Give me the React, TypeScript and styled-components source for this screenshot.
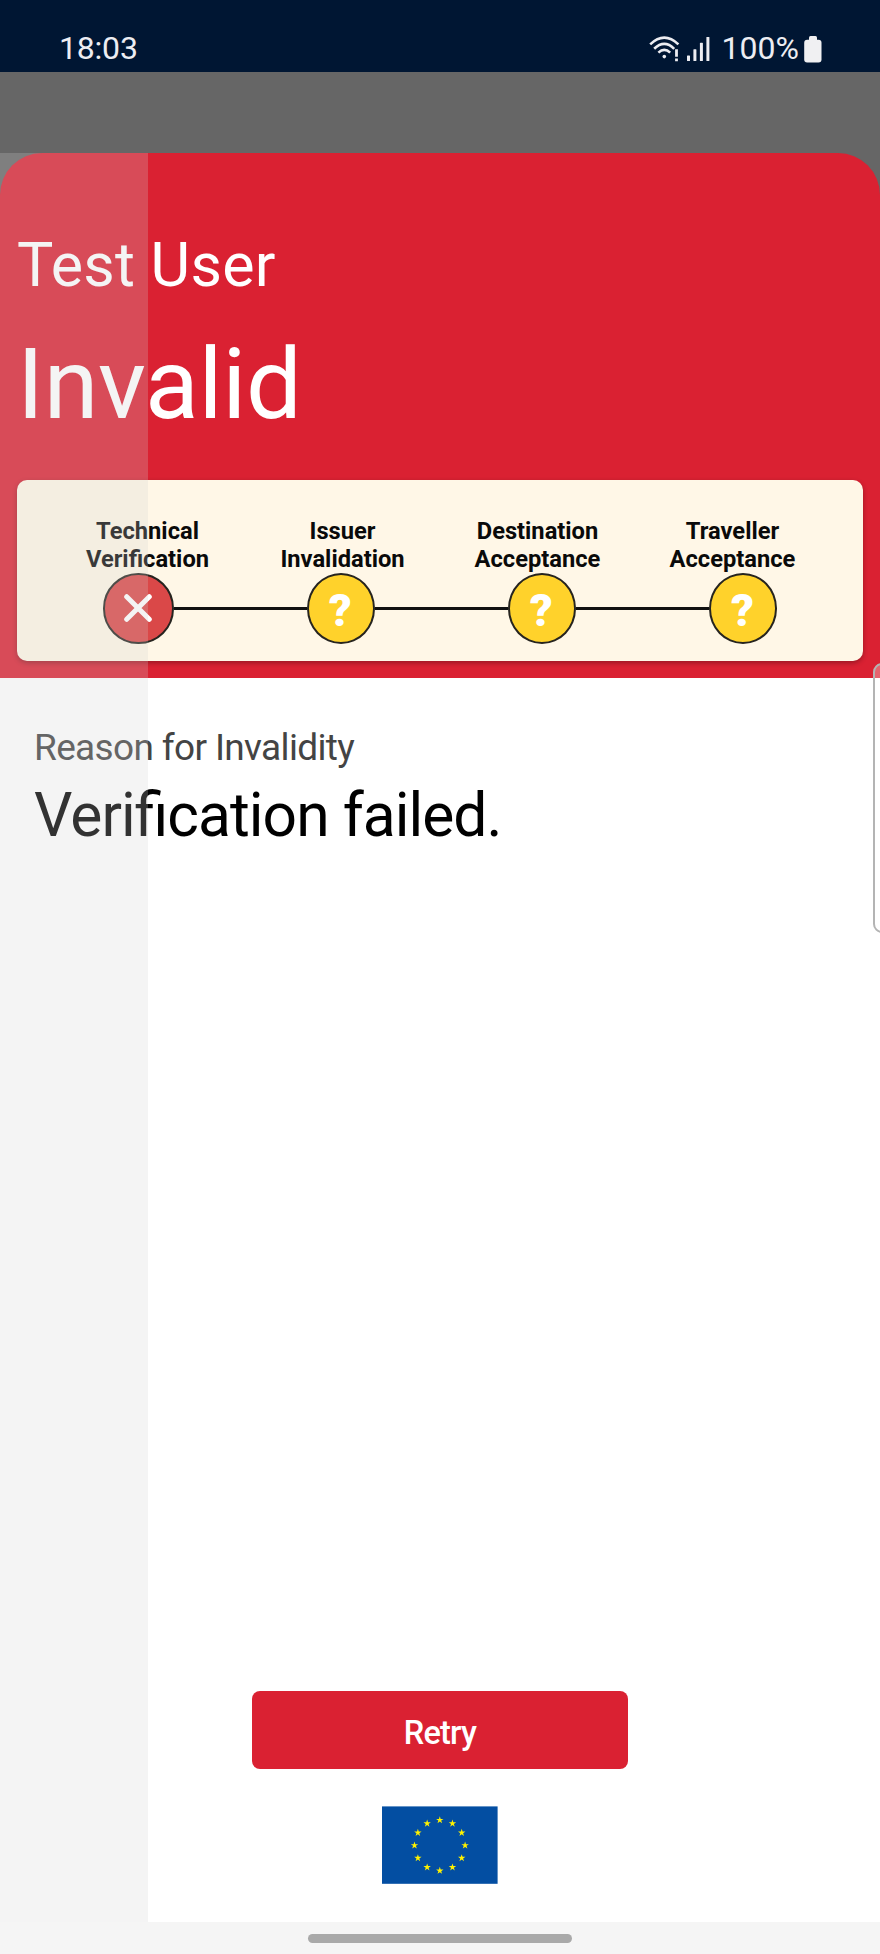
import React from "react";
import styled, { createGlobalStyle } from "styled-components";

const GlobalStyle = createGlobalStyle`
  * { box-sizing: border-box; }
  body { margin: 0; background: #fff; font-family: Roboto, sans-serif; }
`;

const Screen = styled.div`
  position: relative;
  display: flex;
  flex-direction: column;
  width: 880px;
  height: 1954px;
  overflow: hidden;
  background: #fff;
`;

const StatusBar = styled.header`
  display: flex;
  justify-content: space-between;
  height: 71.5px;
  flex: none;
  padding: 27px 58px 0 59px;
  background: #001633;
  color: #ededf2;
  font-size: 32px;
  line-height: 42px;
`;

const Clock = styled.span`
  letter-spacing: -0.2px;
`;

const StatusIcons = styled.div`
  display: flex;
  svg { display: block; }
`;

const WifiTray = styled.div`
  display: flex;
  gap: 6px;
  padding-top: 8px;
`;

const Percent = styled.span`
  margin: 0 5px 0 11px;
`;

const BatteryTray = styled.div`
  padding-top: 7.5px;
`;

const Backdrop = styled.main`
  display: flex;
  flex: 1;
  flex-direction: column;
  padding-top: 81.5px;
  background: #666;
`;

const Sheet = styled.section`
  position: relative;
  display: flex;
  flex: 1;
  flex-direction: column;
`;

const Banner = styled.div`
  height: 525px;
  flex: none;
  padding: 76px 17px 0;
  background: #da2132;
  border-radius: 42px 42px 0 0;
  color: #fff;
`;

const HolderName = styled.div`
  font-size: 61px;
  letter-spacing: 0.25px;
  line-height: 72px;
`;

const Verdict = styled.h1`
  margin: 28px 0 40.5px;
  font-size: 99px;
  font-weight: 400;
  letter-spacing: -0.3px;
  line-height: 110px;
`;

const StepperCard = styled.div`
  height: 181px;
  padding: 38.5px 33px 0;
  background: #fff7e7;
  border-radius: 10px;
  box-shadow: 0 2px 5px rgba(0, 0, 0, 0.3);
`;

const StepLabels = styled.div`
  display: grid;
  grid-template-columns: repeat(4, 1fr);
  color: #0a0a0a;
  font-size: 23.7px;
  font-weight: 700;
  line-height: 27.75px;
  text-align: center;
  white-space: pre-line;
`;

const StepTrack = styled.div`
  display: flex;
  align-items: center;
  padding: 0 53px;
  margin-top: -0.5px;
`;

const StepDot = styled.div<{ $failed?: boolean }>`
  display: flex;
  align-items: center;
  justify-content: center;
  flex: none;
  width: ${(p) => (p.$failed ? 70.5 : 68)}px;
  height: 70.5px;
  border: 2px solid #26241f;
  border-radius: 50%;
  background: ${(p) => (p.$failed ? "#da4848" : "#ffd22b")};
  color: #fff;
  font-size: 45px;
  font-weight: 900;
  line-height: 70px;
  padding: ${(p) => (p.$failed ? 0 : "6px 1px 0 0")};
`;

const StepLine = styled.div`
  flex: 1;
  height: 3px;
  background: #111;
`;

const SheetBody = styled.div`
  display: flex;
  flex: 1;
  flex-direction: column;
  justify-content: space-between;
  background: #fff;
`;

const Details = styled.div`
  padding: 48px 34px 0;
`;

const DetailLabel = styled.div`
  color: #444;
  font-size: 37px;
  letter-spacing: -0.65px;
  line-height: 44px;
`;

const DetailValue = styled.div`
  margin-top: 10px;
  color: #000;
  font-size: 60.5px;
  font-feature-settings: "liga" 1;
  letter-spacing: -0.95px;
  line-height: 72px;
`;

const Actions = styled.footer`
  display: flex;
  flex-direction: column;
  align-items: center;
  gap: 37px;
  padding-bottom: 38px;
  svg { display: block; }
`;

const RetryButton = styled.button`
  width: 376px;
  height: 78px;
  padding: 6px 0 0;
  border: 0;
  border-radius: 8px;
  background: #da2132;
  color: #fff;
  font: 500 32.5px Roboto, sans-serif;
  letter-spacing: -0.8px;
`;

const DragShade = styled.div`
  position: absolute;
  top: 0;
  bottom: 0;
  left: 0;
  width: 147.7px;
  background: rgba(208, 208, 208, 0.24);
`;

const EdgeHandle = styled.div`
  position: absolute;
  top: 663px;
  left: 872.5px;
  width: 24px;
  height: 269.5px;
  border: 2px solid #b4b4b4;
  border-radius: 9px;
  background: rgba(255, 255, 255, 0.3);
`;

const NavBar = styled.nav`
  display: flex;
  justify-content: center;
  height: 32px;
  flex: none;
  padding-top: 12px;
  background: #f5f5f5;
`;

const NavPill = styled.div`
  width: 264px;
  height: 9px;
  border-radius: 4.5px;
  background: #a9a9a9;
`;

const WifiIcon = () => (
  <svg width="32" height="28" viewBox="0 0 32 28" fill="none" stroke="#ededf2" strokeWidth="2.6">
    <path d="M1.2 9.4Q15.3-4.2 29.4 9.4" />
    <path d="M5.2 13.8Q15.3 4 25.2 13.8" />
    <path d="M9.4 17.6Q15.3 12 21.2 17.6" />
    <circle cx="15.3" cy="21.6" r="1.8" fill="#ededf2" stroke="none" />
    <path d="M27.5 14.2v7.6M27.5 23.6v2.6" strokeWidth="2.8" />
  </svg>
);

const SignalIcon = () => (
  <svg width="24" height="28" viewBox="0 0 24 28" fill="#ededf2">
    <rect x="0" y="20.5" width="3" height="5.5" rx="0.6" />
    <rect x="6.4" y="14.2" width="3" height="11.8" rx="0.6" />
    <rect x="12.9" y="7.8" width="3" height="18.2" rx="0.6" />
    <rect x="19.4" y="2" width="3" height="24" rx="0.6" />
  </svg>
);

const BatteryIcon = () => (
  <svg width="18" height="28" viewBox="0 0 18 28" fill="#f0f0f2">
    <rect x="5" y="1" width="8" height="6" rx="1.5" />
    <rect x="0.2" y="4.7" width="17.3" height="22.8" rx="3" />
  </svg>
);

const starPoints = (cx: number, cy: number, r: number) =>
  Array.from({ length: 10 }, (_, i) => {
    const a = (Math.PI * i) / 5 - Math.PI / 2;
    const k = i % 2 ? r * 0.382 : r;
    return `${cx + k * Math.cos(a)},${cy + k * Math.sin(a)}`;
  }).join(" ");

const EuFlag = () => (
  <svg width="116" height="78" viewBox="0 0 116 78">
    <rect x="0" y="0.4" width="115.6" height="77.4" fill="#034ea2" />
    {Array.from({ length: 12 }, (_, i) => {
      const a = (Math.PI * i) / 6;
      return (
        <polygon
          key={i}
          fill="#fff200"
          points={starPoints(57.8 + 25.3 * Math.sin(a), 39.4 - 25.3 * Math.cos(a), 3.9)}
        />
      );
    })}
  </svg>
);

const CrossIcon = () => (
  <svg width="28" height="28" viewBox="0 0 28 28" stroke="#fff" strokeWidth="5" strokeLinecap="round">
    <path d="M2.7 2.7l22.6 22.6M25.3 2.7L2.7 25.3" />
  </svg>
);

const steps = [
  "Technical\nVerification",
  "Issuer\nInvalidation",
  "Destination\nAcceptance",
  "Traveller\nAcceptance",
];

export default function App() {
  return (
    <Screen>
      <GlobalStyle />
      <StatusBar>
        <Clock>18:03</Clock>
        <StatusIcons>
          <WifiTray>
            <WifiIcon />
            <SignalIcon />
          </WifiTray>
          <Percent>100%</Percent>
          <BatteryTray>
            <BatteryIcon />
          </BatteryTray>
        </StatusIcons>
      </StatusBar>
      <Backdrop>
        <Sheet>
          <Banner>
            <HolderName>Test User</HolderName>
            <Verdict>Invalid</Verdict>
            <StepperCard>
              <StepLabels>
                {steps.map((label) => (
                  <span key={label}>{label}</span>
                ))}
              </StepLabels>
              <StepTrack>
                {steps.map((label, i) => (
                  <React.Fragment key={label}>
                    {i > 0 && <StepLine />}
                    <StepDot $failed={i === 0}>{i === 0 ? <CrossIcon /> : "?"}</StepDot>
                  </React.Fragment>
                ))}
              </StepTrack>
            </StepperCard>
          </Banner>
          <SheetBody>
            <Details>
              <DetailLabel>Reason for Invalidity</DetailLabel>
              <DetailValue>Verification failed.</DetailValue>
            </Details>
            <Actions>
              <RetryButton>Retry</RetryButton>
              <EuFlag />
            </Actions>
          </SheetBody>
          <DragShade />
        </Sheet>
      </Backdrop>
      <NavBar>
        <NavPill />
      </NavBar>
      <EdgeHandle />
    </Screen>
  );
}
